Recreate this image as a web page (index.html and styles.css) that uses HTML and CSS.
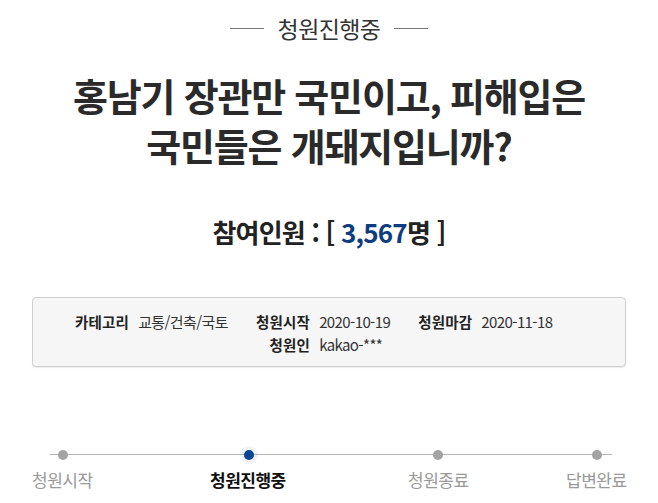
FILE: index.html
```html
<!DOCTYPE html>
<html lang="ko">
<head>
<meta charset="utf-8">
<link rel="stylesheet" href="styles.css">
</head>
<body>
<div class="page">
  <div class="status">
    <span class="rule"></span>
    <span class="status-text">청원진행중</span>
    <span class="rule"></span>
  </div>
  <h1 class="title">홍남기 장관만 국민이고, 피해입은<br>국민들은 개돼지입니까?</h1>
  <div class="count">참여인원 : [ <span class="num">3,567</span>명 ]</div>
  <div class="info">
    <div class="info-grid">
      <span class="lbl">카테고리</span><span class="val gap">교통/건축/국토</span>
      <span class="lbl">청원시작</span><span class="val gap">2020-10-19</span>
      <span class="lbl">청원마감</span><span class="val">2020-11-18</span>
      <span class="lbl c3">청원인</span><span class="val">kakao-***</span>
    </div>
  </div>
  <div class="progress">
    <div class="track">
      <span class="dot d1"></span>
      <span class="dot d2 active"></span>
      <span class="dot d3"></span>
      <span class="dot d4"></span>
    </div>
    <div class="steps">
      <span class="step s1">청원시작</span>
      <span class="step s2 active">청원진행중</span>
      <span class="step s3">청원종료</span>
      <span class="step s4">답변완료</span>
    </div>
  </div>
</div>
</body>
</html>
```

FILE: styles.css
```css
html, body {
  margin: 0;
  padding: 0;
  background: #ffffff;
}
body {
  font-family: "Noto Sans CJK KR", "Noto Sans", sans-serif;
  color: #222;
}
.page {
  width: 658px;
  height: 503px;
  overflow: hidden;
}
.status {
  display: flex;
  justify-content: center;
  align-items: center;
  gap: 14px;
  padding-top: 12px;
  height: 32px;
}
.rule {
  width: 34px;
  height: 1px;
  background: #777;
}
.status-text {
  font-size: 23px;
  color: #333;
  letter-spacing: -0.6px;
  line-height: 32px;
}
.title {
  margin: 26px 0 0;
  text-align: center;
  font-size: 38px;
  line-height: 50px;
  font-weight: 700;
  color: #2a2a2a;
  letter-spacing: -1.2px;
}
.count {
  margin-top: 44px;
  text-align: center;
  font-size: 26px;
  font-weight: 700;
  line-height: 36px;
  color: #222;
  letter-spacing: -0.8px;
}
.num {
  color: #0d3c80;
}
.info {
  margin: 47px 32px 0;
  height: 70px;
  box-sizing: border-box;
  border: 1px solid #cfcfcf;
  border-radius: 4px;
  background: #f6f6f6;
  box-shadow: 0 1px 1px rgba(0,0,0,0.08);
  padding: 12px 0 0 42px;
}
.info-grid {
  display: grid;
  grid-template-columns: repeat(6, auto);
  justify-content: start;
  font-size: 14px;
  line-height: 23px;
}
.lbl {
  font-weight: 700;
  font-size: 14.5px;
  color: #222;
  text-align: right;
  margin-right: 9px;
  letter-spacing: 0.2px;
}
.val {
  color: #333;
  font-size: 15px;
  letter-spacing: -0.6px;
}
.gap { margin-right: 28px; }
.c3 { grid-column: 3; }
.progress {
  margin-top: 82px;
}
.track {
  position: relative;
  margin: 0 46px 0 50px;
  height: 12px;
}
.track::before {
  content: "";
  position: absolute;
  left: 0;
  right: 0;
  top: 5px;
  height: 1px;
  background: #b5b5b5;
}
.dot {
  position: absolute;
  top: 1px;
  width: 10px;
  height: 10px;
  border-radius: 50%;
  background: #a3a3a3;
}
.dot.active {
  background: #0a4495;
  box-shadow: 0 0 0 4px rgba(10,68,149,0.06);
}
.d1 { left: 8px; }
.d2 { left: 194px; }
.d3 { left: 383px; }
.d4 { left: 542px; }
.steps {
  position: relative;
  height: 30px;
  margin-top: 6px;
  font-size: 17px;
  line-height: 26px;
  color: #999;
  letter-spacing: -0.5px;
}
.step {
  position: absolute;
  top: 0;
}
.s1 { left: 32px; }
.s2 { left: 210px; color: #111; font-weight: 700; }
.s3 { left: 408px; }
.s4 { left: 566px; }
```
